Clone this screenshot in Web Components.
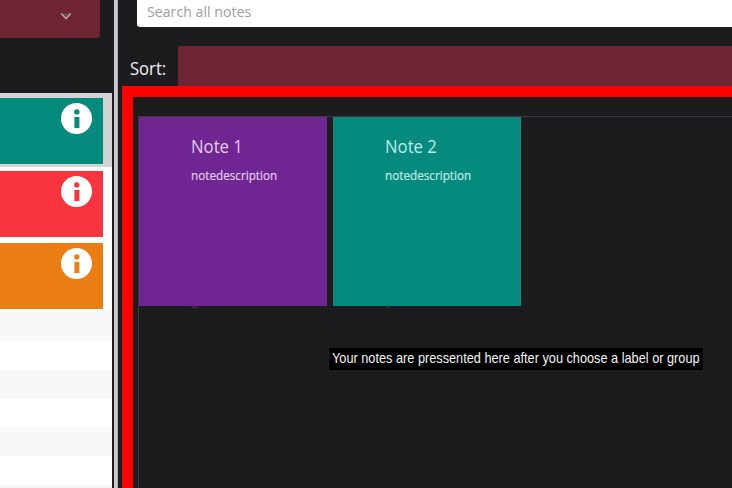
<!DOCTYPE html>
<html lang="en">
<head>
<meta charset="utf-8">
<title>Notes</title>
<style>
html,body{margin:0;height:100%;overflow:hidden;background:#1c1b1d}
body{font-family:"Open Sans","Noto Sans",sans-serif}
</style>
</head>
<body>
<notes-app></notes-app>
<script>
const define = (name, html, init) => {
  const t = document.createElement('template');
  t.innerHTML = html;
  customElements.define(name, class extends HTMLElement {
    constructor() {
      super();
      this.attachShadow({mode: 'open'}).append(t.content.cloneNode(true));
    }
    connectedCallback() { if (init) init(this, this.shadowRoot); }
  });
};

// A single line condensed or widened to the width given by its attribute.
define('fit-text', `<style>
:host{display:block;white-space:nowrap;flex:none}
span{display:inline-block;transform-origin:0 50%}
</style><span><slot></slot></span>`, (el, root) => {
  const s = root.querySelector('span'), w = +el.getAttribute('width');
  el.style.width = w + 'px';
  s.style.transform = 'scaleX(' + w / s.offsetWidth + ')';
});

define('info-icon', `<style>:host{display:block;width:31px;height:31px}svg{display:block}</style>
<svg width="31" height="31" viewBox="0 0 31 31"><circle cx="15.5" cy="15.5" r="15.5" fill="#fff"/>
<circle cx="15.8" cy="8.9" r="2.7" fill="var(--tile)"/><path d="M13.4 13.9h5v11.2h-5z" fill="var(--tile)"/></svg>`);

define('label-row', `<style>
:host{display:block;box-sizing:border-box;height:73px;padding:5px 9px 3px 0;background:var(--row)}
div{height:65.5px;box-sizing:border-box;background:var(--tile);padding:5px 11px 0 0;display:flex;justify-content:flex-end}
</style><div><info-icon></info-icon></div>`);

define('label-list', `<style>
:host{display:block;width:112px;height:395px;overflow:hidden;background:#fff;box-sizing:border-box}
i{display:block;height:28.8px}
i:nth-of-type(odd){background:#f8f8f8}
.one{--tile:#058a7e;--row:#d2d2d2;height:74px}
.two{--tile:#f9343e;--row:#fcfcfc;height:72px;padding-top:4px}
.three{--tile:#eb7e12;--row:#fff;height:71px;padding-top:4px}
</style><label-row class="one"></label-row><label-row class="two"></label-row><label-row class="three"></label-row><i style="height:31px"></i><i></i><i></i><i></i><i></i><i></i><i></i>`);

define('side-panel', `<style>
:host{display:flex;flex-direction:column;width:114px;height:488px;flex:none}
.pick{width:100px;height:38px;background:#6f2434;border-radius:0 0 3px 0;margin-bottom:55px;display:flex;justify-content:flex-end;box-sizing:border-box;padding:12px 28px 0 0}
svg{display:block}
</style><div class="pick"><svg width="12" height="9" viewBox="0 0 12 9"><path d="M1.7 1.5h8.6L6 6.5z" fill="#665057"/><path d="M1.2 1.5L6 6.6l4.8-5.1" fill="none" stroke="#c9b9bd" stroke-width="1.1"/></svg></div><label-list></label-list>`);

define('search-field', `<style>
:host{display:block;box-sizing:border-box;height:27px;margin-left:19px;background:#fff;border-radius:0 0 0 3px;padding:0 0 0 10px;color:#a0a0a0;font-size:15px;line-height:22px}
</style><slot></slot>`);

define('sort-bar', `<style>
:host{display:flex;height:40px;margin:19px 0 0 12px}
fit-text{color:#f2f2f2;font-size:18px;line-height:44px;margin-right:12px}
div{flex:1;background:#6f2434;border-radius:3px 0 0 0}
</style><fit-text width="36">Sort:</fit-text><div></div>`);

define('note-card', `<style>
:host{display:block;position:relative;box-sizing:border-box;width:188px;height:188.5px;padding:17px 0 0 51.5px;background:var(--card);color:var(--ink);flex:none}
.h{font-size:18px;line-height:25px;height:25px}
.d{font-size:13px;line-height:18px;margin-top:7px;-webkit-text-stroke:.2px}
</style><fit-text class="h" width="52"><slot name="title"></slot></fit-text><fit-text class="d" width="86.5"><slot></slot></fit-text><slot name="trace"></slot>`);

define('note-board', `<style>
:host{display:block;box-sizing:border-box;height:402px;margin-left:4px;border:solid #f00;border-width:11px 0 0 11px;padding:19px 0 0 5px}
.area{box-sizing:border-box;height:372px;border:solid #3b393f;border-width:1px 0 0 1px}
.cards{display:flex;gap:6px;padding-left:.4px}
/* Descenders that peek out under the cards. */
.g{position:absolute;left:52px;top:188px;width:7px;height:3px;box-sizing:border-box;border:1px solid #57236e;border-top:0;border-radius:0 0 3px 3px}
.p{position:absolute;left:54px;top:188px;width:1px;height:3px;background:#155b56}
.msg{box-sizing:border-box;width:374px;height:22px;margin:42.5px 0 0 190px;padding-left:3px;background:#000;color:#f3f3f3;font:15px/20px "Liberation Sans",sans-serif}
</style><div class="area"><div class="cards">
<note-card style="--card:#6f2693;--ink:#e3cdf0"><span slot="title">Note 1</span>notedescription<i class="g" slot="trace"></i></note-card>
<note-card style="--card:#058a7e;--ink:#c0ebe5"><span slot="title">Note 2</span>notedescription<i class="p" slot="trace"></i></note-card>
</div><div class="msg"><fit-text width="367.5">Your notes are pressented here after you choose a label or group</fit-text></div></div>`);

define('notes-app', `<style>
:host{display:flex;width:732px;height:488px;overflow:hidden;background:#1c1b1d}
.split{flex:none;width:4px;box-sizing:border-box;background:#cbc9cb;border-right:1px solid #a9afb8}
main{flex:1;min-width:0}
</style><side-panel></side-panel><div class="split"></div><main>
<search-field><fit-text width="104">Search all notes</fit-text></search-field>
<sort-bar></sort-bar><note-board></note-board></main>`);
</script>
</body>
</html>
